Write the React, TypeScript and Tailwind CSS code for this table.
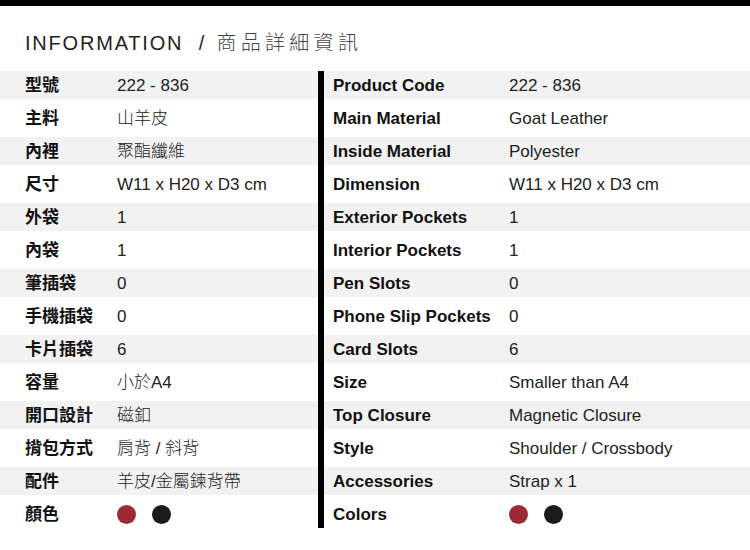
import { FC } from "react";

interface SpecRow {
    label: string;
    value: string;
}

const ZH_ROWS: SpecRow[] = [
    { label: '型號', value: '222 - 836' },
    { label: '主料', value: '山羊皮' },
    { label: '內裡', value: '聚酯纖維' },
    { label: '尺寸', value: 'W11 x H20 x D3 cm' },
    { label: '外袋', value: '1' },
    { label: '內袋', value: '1' },
    { label: '筆插袋', value: '0' },
    { label: '手機插袋', value: '0' },
    { label: '卡片插袋', value: '6' },
    { label: '容量', value: '小於A4' },
    { label: '開口設計', value: '磁釦' },
    { label: '揹包方式', value: '肩背 / 斜背' },
    { label: '配件', value: '羊皮/金屬鍊背帶' },
    { label: '顏色', value: '' },
];

const EN_ROWS: SpecRow[] = [
    { label: 'Product Code', value: '222 - 836' },
    { label: 'Main Material', value: 'Goat Leather' },
    { label: 'Inside Material', value: 'Polyester' },
    { label: 'Dimension', value: 'W11 x H20 x D3 cm' },
    { label: 'Exterior Pockets', value: '1' },
    { label: 'Interior Pockets', value: '1' },
    { label: 'Pen Slots', value: '0' },
    { label: 'Phone Slip Pockets', value: '0' },
    { label: 'Card Slots', value: '6' },
    { label: 'Size', value: 'Smaller than A4' },
    { label: 'Top Closure', value: 'Magnetic Closure' },
    { label: 'Style', value: 'Shoulder / Crossbody' },
    { label: 'Accessories', value: 'Strap x 1' },
    { label: 'Colors', value: '' },
];

const FONT = "font-['Liberation_Sans','Noto_Sans_CJK_TC',sans-serif]";

const Swatches: FC = () => (
    <div className="flex items-center gap-[16px]">
        <span className="w-[19px] h-[19px] rounded-full bg-[#9b2a35]" />
        <span className="w-[19px] h-[19px] rounded-full bg-[#1c1a1b]" />
    </div>
);

const SpecColumn: FC<{ rows: SpecRow[]; labelClass: string; rowPad: string }> = ({ rows, labelClass, rowPad }) => (
    <div className="flex flex-col gap-[5px]">
        {rows.map((row, i) => (
            <div
                key={row.label}
                className={`h-[28px] flex items-center ${rowPad} ${i % 2 === 0 ? 'bg-[#f2f2f2]' : 'bg-white'}`}
            >
                <span className={`${labelClass} shrink-0 font-bold text-[#111] whitespace-nowrap`}>{row.label}</span>
                {row.value ? (
                    <span className="font-light text-[#222] whitespace-nowrap">{row.value}</span>
                ) : (
                    <Swatches />
                )}
            </div>
        ))}
    </div>
);

export default function App() {
    return (
        <div className={`w-[750px] h-[550px] bg-white ${FONT} text-[17px] leading-none overflow-hidden`}>
            {/* Top bar */}
            <div className="h-[6px] bg-black" />

            {/* Title */}
            <div className="pl-[25px] pt-[25px] h-[65px] text-[20px] leading-[24px] whitespace-nowrap">
                <span className="tracking-[1.8px] text-[#222]">INFORMATION</span>
                <span className="ml-[8px] tracking-[1.8px] text-[#222]"> / </span>
                <span className="ml-[3px] font-light tracking-[4.3px] text-[#444]">商品詳細資訊</span>
            </div>

            {/* Spec tables */}
            <div className="flex">
                <div className="w-[318px]">
                    <SpecColumn rows={ZH_ROWS} labelClass="w-[92px]" rowPad="pl-[25px]" />
                </div>
                <div className="flex-1 border-l-[6px] border-black">
                    <SpecColumn rows={EN_ROWS} labelClass="w-[176px]" rowPad="pl-[9px]" />
                </div>
            </div>
        </div>
    );
}
